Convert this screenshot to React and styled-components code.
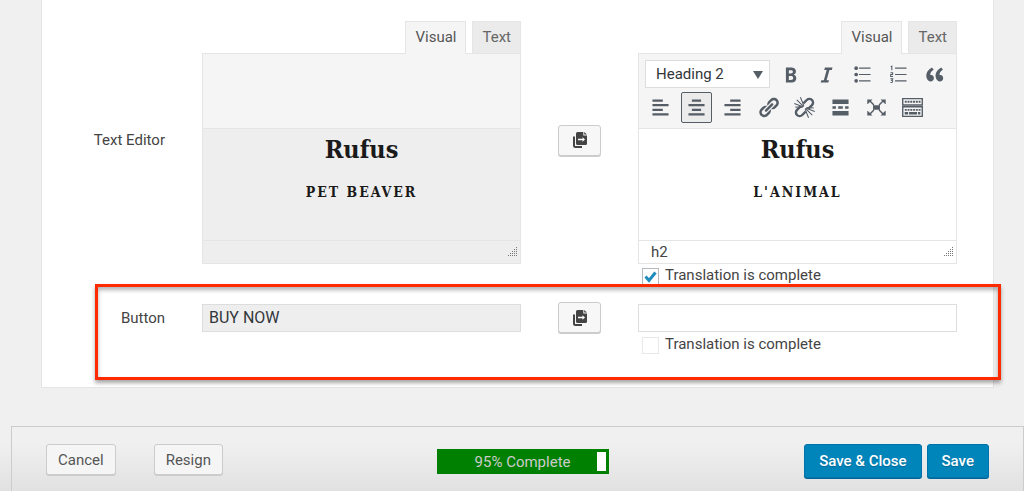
import React from "react";
import styled, { createGlobalStyle, css } from "styled-components";

const sans = 'Roboto, "Liberation Sans", sans-serif';
const serif = '"DejaVu Serif Condensed", "DejaVu Serif", serif';

const GlobalStyle = createGlobalStyle`
  *, *::before, *::after { box-sizing: border-box; }
  body { margin: 0; background: #f1f1f1; color: #444; font: 15px/20px ${sans}; }
  button, input, select { font: inherit; color: inherit; margin: 0; }
`;

const Page = styled.div`
  min-height: 100vh;
  display: flex;
  flex-direction: column;
  overflow: hidden;
  background: linear-gradient(to top, #e1e1e1, #f0f0f0 48px);
`;

const Panel = styled.main`
  display: flex;
  flex-direction: column;
  gap: 17px;
  margin: 0 30px 38px 41px;
  padding: 21px 36px 33px 0;
  background: #fff;
  border: 1px solid #e5e5e5;
  border-top: 0;
`;

const Row = styled.section`
  position: relative;
  display: grid;
  grid-template-columns: 123px minmax(0, 1fr) 43px minmax(0, 1fr);
  column-gap: 37px;
  align-items: center;
  ${(p) =>
    p.$tall &&
    css`
      > :nth-child(1), > :nth-child(3) { margin-bottom: 5px; }
    `}
  ${(p) =>
    p.$highlighted &&
    css`
      &::after {
        content: "";
        position: absolute;
        inset: -18px -44px -26px 53px;
        border: 3px solid #ff2a00;
        box-shadow: 0 3px 4px rgba(0, 0, 0, 0.35), inset 0 3px 4px rgba(0, 0, 0, 0.3);
        pointer-events: none;
      }
    `}
`;

const RowLabel = styled.span`
  text-align: right;
`;

const Editor = styled.div`
  display: flex;
  flex-direction: column;
`;

const Tabs = styled.div`
  display: flex;
  justify-content: flex-end;
  gap: 6px;
`;

const Tab = styled.button`
  height: 32px;
  padding: 0 9px 1px;
  border: 1px solid #e5e5e5;
  border-bottom: 0;
  background: ${(p) => (p.$active ? "#f5f5f5" : "#ebebeb")};
  color: ${(p) => (p.$active ? "#555" : "#666")};
  ${(p) =>
    p.$active &&
    css`
      position: relative;
      height: 33px;
      margin-bottom: -1px;
      padding-bottom: 2px;
    `}
`;

const Frame = styled.div`
  border: 1px solid #e5e5e5;
  background: ${(p) => (p.$readOnly ? "#eee" : "#fff")};
`;

const Toolbar = styled.div`
  display: flex;
  flex-direction: column;
  gap: 4px;
  min-height: 75px;
  padding: 6px 6px 4px;
  background: #f5f5f5;
  border-bottom: 1px solid #e5e5e5;
`;

const ToolRow = styled.div`
  display: flex;
  gap: 5px;
`;

const SelectBox = styled.div`
  position: relative;
  width: 125px;
`;

const FormatSelect = styled.select`
  width: 100%;
  height: 28px;
  padding: 0 10px;
  appearance: none;
  border: 1px solid #ddd;
  border-radius: 0;
  background: #fff;
  color: #32373c;
`;

const SelectArrow = styled.svg`
  position: absolute;
  right: 7px;
  top: 11px;
  pointer-events: none;
`;

const Tool = styled.button`
  display: flex;
  align-items: center;
  justify-content: center;
  width: 31px;
  height: ${(p) => (p.$short ? 28 : 31)}px;
  padding: 0;
  border: 1px solid ${(p) => (p.$pressed ? "#555d66" : "transparent")};
  border-radius: 2px;
  background: ${(p) => (p.$pressed ? "#ebebeb" : "none")};
  color: #555d66;
  svg { flex: none; }
`;

const Content = styled.div`
  height: 111px;
  padding-top: 4px;
  text-align: center;
  font-family: ${serif};
  color: #1a1a1a;
`;

const Title = styled.h2`
  margin: 0;
  font-size: 25px;
  line-height: 34px;
`;

const Subtitle = styled.h4`
  margin: 15px 0 0;
  font-size: 14px;
  line-height: 20px;
  letter-spacing: 2px;
`;

const StatusBar = styled.div`
  display: flex;
  align-items: center;
  justify-content: space-between;
  height: 23px;
  padding: 0 2px 0 12px;
  border-top: 1px solid #e5e5e5;
`;

const CopyButton = styled.button`
  display: flex;
  align-items: center;
  justify-content: center;
  height: 31px;
  padding: 0;
  border: 1px solid #ccc;
  border-radius: 3px;
  background: #f7f7f7;
  box-shadow: 0 1px 0 #ccc;
  color: #444;
`;

const TextField = styled.input`
  width: 100%;
  height: 28px;
  padding: 0 6px;
  border: 1px solid #ddd;
  border-radius: 0;
  background: ${(p) => (p.readOnly ? "#eee" : "#fff")};
  color: #32373c;
  font-size: 16px;
`;

const CheckLabel = styled.label`
  grid-column: 4;
  display: flex;
  gap: 6px;
  margin-top: 1px;
  padding-left: 4px;
`;

const CheckBox = styled.span`
  position: relative;
  width: 17px;
  height: 17px;
  margin-top: 3px;
  svg { position: absolute; left: 1px; top: 1px; pointer-events: none; }
`;

const CheckInput = styled.input`
  display: block;
  width: 100%;
  height: 100%;
  appearance: none;
  background: #fff;
  border: 1px solid ${(p) => (p.$faint ? "#e8e8e8" : "#b4b9be")};
`;

const Footer = styled.footer`
  flex: 1;
  display: flex;
  align-items: flex-start;
  justify-content: space-between;
  margin-left: 11px;
  padding: 17px 34px 11px;
  border: 1px solid #ccc;
  border-bottom: 0;
`;

const ButtonGroup = styled.div`
  display: flex;
  align-items: flex-start;
  gap: ${(p) => p.$gap}px;
  padding-right: ${(p) => p.$after || 0}px;
`;

const Button = styled.button`
  height: ${(p) => (p.$primary ? 34 : 31)}px;
  padding: 0 ${(p) => (p.$primary ? 14 : 11)}px;
  border: 1px solid ${(p) => (p.$primary ? "#0073aa" : "#ccc")};
  border-radius: 3px;
  background: ${(p) => (p.$primary ? "#0085ba" : "#f5f5f5")};
  box-shadow: 0 1px 0 ${(p) => (p.$primary ? "#006799" : "#ccc")};
  color: ${(p) => (p.$primary ? "#fff" : "#555")};
  font-weight: ${(p) => (p.$primary ? 500 : 400)};
  text-shadow: ${(p) => (p.$primary ? "0 1px 1px #006799" : "none")};
`;

const Progress = styled.div`
  position: relative;
  width: 172px;
  height: 25px;
  margin-top: 5px;
  padding: 2px;
  border: 1px solid #008000;
  background: #fff;
  background-clip: content-box;
  box-shadow: inset 0 0 0 2px #008000;
`;

const ProgressFill = styled.div`
  height: 100%;
  background: #008000;
`;

const ProgressText = styled.span`
  position: absolute;
  inset: 0;
  line-height: 24px;
  text-align: center;
  color: #ccc;
`;

const Icon = ({ children }) => (
  <svg width="23" height="23" viewBox="0 0 20 20" fill="currentColor" aria-hidden="true">
    {children}
  </svg>
);

const numerals = (
  <g fill="none" stroke="currentColor" strokeWidth="0.9">
    <path d="M3.2 3.400 4.200 2.800V6.400M3 8.400H4.900V10H3.200V11.800H5.200M3 13.700H5L4 15.100C5.600 15.200 5.300 17.300 3 17" />
  </g>
);

const icons = {
  bold: <path d="M6 4v13h4.54c1.37 0 2.46-.33 3.26-1 .8-.66 1.2-1.58 1.2-2.77 0-.84-.17-1.51-.51-2.01s-.9-.85-1.67-1.03v-.09c.57-.1 1.02-.4 1.36-.9s.51-1.13.51-1.91c0-1.14-.39-1.98-1.17-2.5C12.75 4.26 11.5 4 9.78 4H6zm2.57 5.15V6.26h1.36c.73 0 1.27.11 1.61.32.34.22.51.58.51 1.07 0 .54-.16.92-.47 1.15s-.82.35-1.51.35h-1.5zm0 2.19h1.6c1.44 0 2.16.53 2.16 1.61 0 .6-.17 1.05-.51 1.34s-.86.43-1.57.43H8.57v-3.38z" />,
  italic: <path d="M15.200 4l-.5 2h-2.130l-2.500 9h2.120l-.62 2H4.900l.62-2h2.140l2.500-9H8.030l.62-2z" />,
  bullets: (
    <>
      <circle cx="4.5" cy="4.5" r="1.6" /><circle cx="4.5" cy="10" r="1.6" /><circle cx="4.5" cy="15.5" r="1.6" />
      <path d="M7 4h10v1H7zM7 9.5h10v1H7zM7 15h10v1H7z" />
    </>
  ),
  numbers: <>{numerals}<path d="M7 4h10v1H7zM7 9.5h10v1H7zM7 15h10v1H7z" /></>,
  quote: <path d="M9.49 13.22c0-.74-.2-1.38-.61-1.9-.62-.78-1.83-.88-2.53-.72-.29-1.65 1.11-3.75 2.92-4.65L7.88 4c-2.73 1.3-5.42 4.28-4.96 8.05C3.21 14.43 4.59 16 6.54 16c.85 0 1.56-.25 2.12-.75s.83-1.18.83-2.03zm8.05 0c0-.74-.2-1.38-.61-1.9-.63-.78-1.83-.88-2.53-.72-.29-1.65 1.11-3.75 2.92-4.65L15.93 4c-2.73 1.3-5.41 4.28-4.95 8.05.29 2.38 1.66 3.95 3.61 3.95.85 0 1.56-.25 2.12-.75s.83-1.18.83-2.03z" />,
  left: <path d="M12 5V3H3v2h9zm5 4V7H3v2h14zm-5 4v-2H3v2h9zm5 4v-2H3v2h14z" />,
  center: <path d="M14 5V3H6v2h8zm3 4V7H3v2h14zm-3 4v-2H6v2h8zm3 4v-2H3v2h14z" />,
  right: <path d="M17 5V3H8v2h9zm0 4V7H3v2h14zm0 4v-2H8v2h9zm0 4v-2H3v2h14z" />,
  link: <path d="M17.74 2.76c1.68 1.69 1.68 4.41 0 6.1l-1.53 1.52c-1.12 1.12-2.7 1.47-4.14 1.09l2.62-2.61.76-.77.76-.76c.84-.84.84-2.2 0-3.04-.84-.85-2.2-.85-3.04 0l-.77.76-3.38 3.38c-.37-1.44-.02-3.02 1.1-4.14l1.52-1.53c1.69-1.68 4.42-1.68 6.1 0zM8.59 13.43l5.34-5.34c.42-.42.42-1.1 0-1.52-.44-.43-1.13-.39-1.53 0l-5.33 5.34c-.42.42-.42 1.1 0 1.52.44.43 1.13.39 1.52 0zm-.76 2.29l4.14-4.15c.38 1.44.03 3.02-1.09 4.14l-1.52 1.53c-1.69 1.68-4.41 1.68-6.1 0-1.68-1.68-1.68-4.42 0-6.1l1.53-1.52c1.12-1.12 2.7-1.47 4.14-1.1l-4.14 4.15c-.85.84-.85 2.2 0 3.05.84.84 2.2.84 3.04 0z" />,
  unlink: (
    <g fill="none" stroke="currentColor" transform="rotate(-45 10 10)">
      <path strokeWidth="2.1" d="M8.600 6.800H4a3.200 3.200 0 0 0 0 6.400H8.200M11.400 13.200H16a3.200 3.200 0 0 0 0-6.400H11.800" />
      <path strokeWidth="0.9" d="M10 9V0.500M9.300 8.500 6.200 1.200M10.700 8.500 13.800 1.200M10 11V19.500M9.300 11.500 6.200 18.800M10.700 11.500 13.800 18.800M8.800 8.800 4.600 4M11.200 11.200 15.400 16" />
    </g>
  ),
  more: <path d="M17 7V3H3v4h14zM6 11V9H3v2h3zm6 0V9H8v2h4zm5 0V9h-3v2h3zm0 6v-4H3v4h14z" />,
  expand: (
    <path d="M7 8h6v4H7zM2 3h4.500L5.200 4.300 8.200 7.300 7.300 8.200 4.300 5.200 2.500 7H2zM18 3v4h-.5L15.700 5.200l-3 3-.9-.9 3-3L13.500 3zM2 17v-4h.5l1.800 1.800 3-3 .9.9-3 3L6.500 17zM18 17h-4.500l1.300-1.300-3-3 .9-.9 3 3L17.500 13h.5z" />
  ),
  keyboard: (
    <>
      <path fill="none" stroke="currentColor" strokeWidth="1.2" d="M1.500 2.300h17v5.500h-17zM1.500 9.300h17v8.400h-17z" />
      <path fill="none" stroke="currentColor" strokeWidth="1.6" strokeDasharray="1.7 .7" d="M3.300 5h13.900M3.300 12h13.900" />
      <path d="M3.200 14h3v2h-3zM7 14h7v2H7zM14.800 14h2v2h-2z" />
    </>
  ),
};

const Copy = () => (
  <svg width="16" height="18" viewBox="0 0 16 18" aria-hidden="true">
    <path fill="none" stroke="currentColor" strokeWidth="2" d="M2 5.500V14.500Q2 16 3.500 16H10" />
    <path fill="currentColor" d="M5.500 1H11.300V4.500H15V12.500Q15 14 13.500 14H5.500Q4 14 4 12.500V2.500Q4 1 5.500 1Z" />
    <path fill="currentColor" d="M12.200 1 15 3.600H12.200Z" />
    <path fill="#fff" d="M6 7.700H10.500V6.200L13 8.500 10.500 10.800V9.300H6Z" />
  </svg>
);

const Grip = () => (
  <svg width="12" height="12" viewBox="0 0 12 12" fill="#777" aria-hidden="true">
    {[0, 1, 2, 3, 4].map((r) =>
      Array.from({ length: r + 1 }, (_, c) => (
        <rect key={`${r}-${c}`} x={10 - 2 * c} y={2 * r + 1} width="1" height="1" />
      ))
    )}
  </svg>
);

const EditorTabs = () => (
  <Tabs>
    <Tab type="button" $active>Visual</Tab>
    <Tab type="button">Text</Tab>
  </Tabs>
);

const TranslationEditor = ({ readOnly, subtitle, children, path }) => (
  <Editor>
    <EditorTabs />
    <Frame $readOnly={readOnly}>
      <Toolbar>{children}</Toolbar>
      <Content>
        <Title>Rufus</Title>
        <Subtitle>{subtitle}</Subtitle>
      </Content>
      <StatusBar><span>{path}</span><Grip /></StatusBar>
    </Frame>
  </Editor>
);

const ToolButton = ({ name, ...rest }) => (
  <Tool type="button" aria-label={name} {...rest}><Icon>{icons[name]}</Icon></Tool>
);

const Complete = ({ checked }) => (
  <CheckLabel>
    <CheckBox>
      <CheckInput type="checkbox" defaultChecked={checked} $faint={!checked} />
      {checked && (
        <svg width="15" height="15" viewBox="0 0 15 15" aria-hidden="true">
          <path fill="none" stroke="#1e8cbe" strokeWidth="3" d="M2.500 7.500 6 11.500 12.500 3.500" />
        </svg>
      )}
    </CheckBox>
    Translation is complete
  </CheckLabel>
);

const CopyControl = () => (
  <CopyButton type="button" aria-label="Copy from original"><Copy /></CopyButton>
);

export default function App() {
  return (
    <Page>
      <GlobalStyle />
      <Panel>
        <Row $tall>
          <RowLabel>Text Editor</RowLabel>
          <TranslationEditor readOnly subtitle="PET BEAVER" />
          <CopyControl />
          <TranslationEditor subtitle="L'ANIMAL" path="h2">
            <ToolRow>
              <SelectBox>
                <FormatSelect aria-label="Format"><option>Heading 2</option></FormatSelect>
                <SelectArrow width="10" height="8" viewBox="0 0 10 8"><path fill="#555d66" d="M0 0h10L5 8z" /></SelectArrow>
              </SelectBox>
              {["bold", "italic", "bullets", "numbers", "quote"].map((n) => <ToolButton key={n} name={n} $short />)}
            </ToolRow>
            <ToolRow>
              {["left", "center", "right", "link", "unlink", "more", "expand", "keyboard"].map((n) => (
                <ToolButton key={n} name={n} $pressed={n === "center"} />
              ))}
            </ToolRow>
          </TranslationEditor>
          <Complete checked />
        </Row>
        <Row $highlighted>
          <RowLabel as="label" htmlFor="button-source">Button</RowLabel>
          <TextField id="button-source" readOnly defaultValue="BUY NOW" />
          <CopyControl />
          <TextField aria-label="Button translation" />
          <Complete />
        </Row>
      </Panel>
      <Footer>
        <ButtonGroup $gap={38} $after={18}>
          <Button type="button">Cancel</Button>
          <Button type="button">Resign</Button>
        </ButtonGroup>
        <Progress role="progressbar" aria-valuenow={95} aria-label="Translation progress">
          <ProgressFill style={{ width: "95%" }} />
          <ProgressText>95% Complete</ProgressText>
        </Progress>
        <ButtonGroup $gap={5}>
          <Button type="button" $primary>Save &amp; Close</Button>
          <Button type="button" $primary>Save</Button>
        </ButtonGroup>
      </Footer>
    </Page>
  );
}
